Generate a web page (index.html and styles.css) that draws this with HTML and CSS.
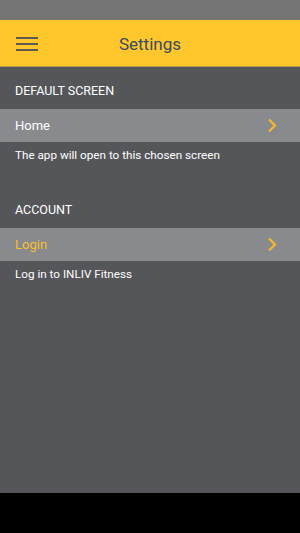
FILE: index.html
```html
<!DOCTYPE html>
<html lang="en">
<head>
    <meta charset="UTF-8">
    <meta name="viewport" content="width=device-width, initial-scale=1.0">
    <title>Settings</title>
    <link rel="stylesheet" href="styles.css">
</head>
<body>
    <div class="status-bar"></div>

    <header class="top-bar">
        <button class="menu-btn" aria-label="Menu">
            <span></span><span></span><span></span>
        </button>
        <h1>Settings</h1>
    </header>

    <main class="content">
        <div class="section">
            <div class="section-title">DEFAULT SCREEN</div>
            <div class="row">
                <span>Home</span>
                <svg class="chevron" width="10" height="15" viewBox="0 0 10 15">
                    <polyline points="2,1.5 8,7.5 2,13.5" fill="none" stroke="#F4B92B" stroke-width="2.2"/>
                </svg>
            </div>
            <div class="hint">The app will open to this chosen screen</div>
        </div>

        <div class="section">
            <div class="section-title">ACCOUNT</div>
            <div class="row row-login">
                <span>Login</span>
                <svg class="chevron" width="10" height="15" viewBox="0 0 10 15">
                    <polyline points="2,1.5 8,7.5 2,13.5" fill="none" stroke="#F4B92B" stroke-width="2.2"/>
                </svg>
            </div>
            <div class="hint">Log in to INLIV Fitness</div>
        </div>
    </main>

    <div class="nav-bar"></div>
</body>
</html>
```

FILE: styles.css
```css
body {
    margin: 0;
    height: 533px;
    display: flex;
    flex-direction: column;
    font-family: Roboto, "Noto Sans", Arial, sans-serif;
    background-color: #55565A;
    color: #FFFFFF;
    overflow: hidden;
}
.status-bar {
    height: 20px;
    background-color: #757575;
    flex-shrink: 0;
}
.top-bar {
    height: 46px;
    background-color: #FFC72C;
    border-bottom: 1px solid #B49A4A;
    display: flex;
    align-items: center;
    position: relative;
    flex-shrink: 0;
}
.top-bar h1 {
    flex: 1;
    margin: 0;
    padding-top: 2px;
    text-align: center;
    font-size: 17px;
    font-weight: normal;
    color: #3A4A62;
}
.menu-btn {
    position: absolute;
    left: 16px;
    top: 17px;
    width: 22px;
    height: 14px;
    padding: 0;
    border: none;
    background: none;
    display: flex;
    flex-direction: column;
    justify-content: space-between;
}
.menu-btn span {
    display: block;
    height: 2px;
    background-color: #5E5C52;
}
.content {
    flex: 1;
    padding-top: 2px;
}
.section-title {
    padding: 14px 15px 10px;
    line-height: 16px;
    font-size: 12.5px;
}
.row {
    height: 33px;
    background-color: #898A8E;
    display: flex;
    align-items: center;
    justify-content: space-between;
    padding: 0 23px 0 15px;
    font-size: 13px;
}
.row-login {
    color: #F8BF2A;
}
.hint {
    padding: 5px 15px 25px;
    line-height: 16px;
    font-size: 11.7px;
}
.nav-bar {
    height: 40px;
    background-color: #000000;
    flex-shrink: 0;
}
```
